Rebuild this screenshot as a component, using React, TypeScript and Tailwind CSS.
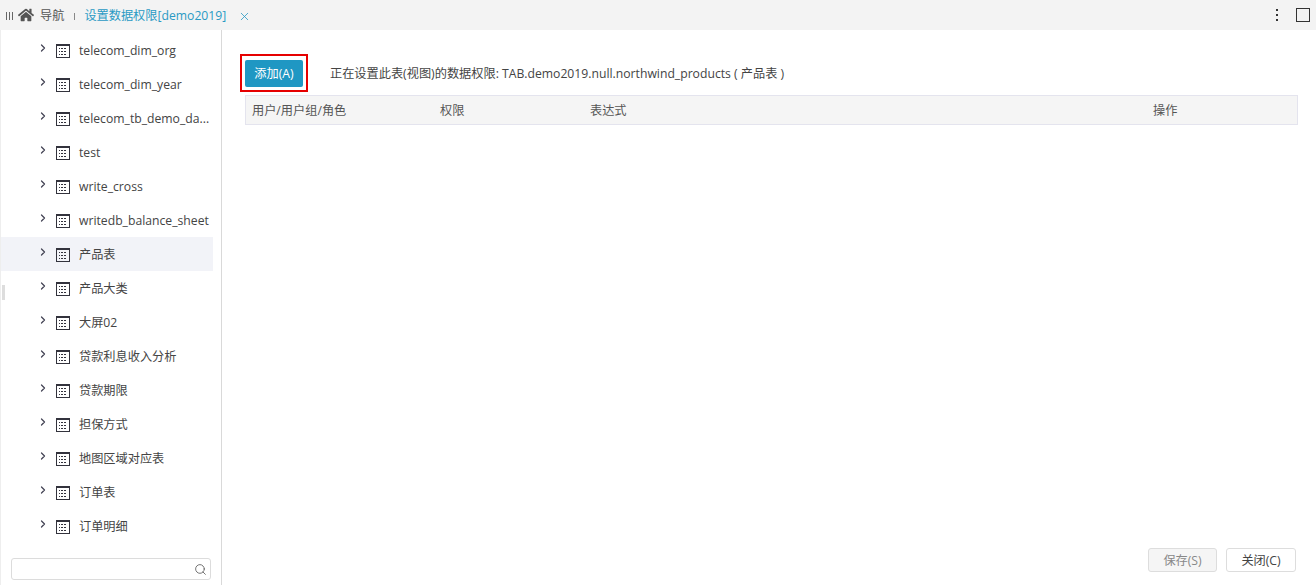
import { ChevronRight, Search, X } from 'lucide-react';
import { FaHome } from 'react-icons/fa';

const tables = [
  'telecom_dim_org',
  'telecom_dim_year',
  'telecom_tb_demo_da...',
  'test',
  'write_cross',
  'writedb_balance_sheet',
  '产品表',
  '产品大类',
  '大屏02',
  '贷款利息收入分析',
  '贷款期限',
  '担保方式',
  '地图区域对应表',
  '订单表',
  '订单明细',
];

function TableIcon() {
  return (
    <svg width="14" height="14" viewBox="0 0 14 14" className="shrink-0 text-[#33333d]">
      <rect x="0.5" y="0.5" width="13" height="13" fill="none" stroke="currentColor" />
      <rect x="0" y="0" width="14" height="2" fill="currentColor" />
      <path d="M3 4.5h1M3 7.5h1M3 10.5h1M5 4.5h6M5 7.5h6M5 10.5h6" stroke="currentColor" strokeDasharray="2 1" />
    </svg>
  );
}

export default function App() {
  return (
    <div className="flex h-[585px] w-[1316px] flex-col overflow-hidden bg-white font-['Open_Sans','Noto_Sans_CJK_SC',sans-serif] text-[12.2px] text-[#555555]">
      <div className="flex h-[30px] shrink-0 items-center bg-[#f3f3f3] pt-[2px]">
        <div className="ml-[6px] flex h-2 w-[7px] justify-between">
          <span className="w-px bg-[#666666]" />
          <span className="w-px bg-[#666666]" />
          <span className="w-px bg-[#666666]" />
        </div>
        <div className="mb-[3px] ml-[5px]">
          <FaHome size={16} className="text-[#555555]" />
        </div>
        <span className="ml-[6px]">导航</span>
        <span className="ml-[10px] h-[7px] w-px bg-[#888888]" />
        <span className="ml-[9px] text-[#2a9ac4]">设置数据权限[demo2019]</span>
        <X size={13} strokeWidth={1.5} className="ml-[12px] text-[#2a9ac4]" />
        <div className="mr-[38px] mb-[2px] ml-auto flex flex-col gap-[3px]">
          <span className="h-[2px] w-[2px] bg-[#333333]" />
          <span className="h-[2px] w-[2px] bg-[#333333]" />
          <span className="h-[2px] w-[2px] bg-[#333333]" />
        </div>
      </div>
      <div className="flex min-h-0 flex-1">
        <aside className="relative flex w-[222px] shrink-0 flex-col border-r border-l border-r-[#d9d9d9] border-l-[#eeeeee] pt-[3px]">
          <span className="absolute top-[255px] left-px h-[15px] w-[3px] bg-[#dddddd]" />
          <ul className="w-[212px]">
            {tables.map((name) => (
              <li
                key={name}
                className={`flex h-[34px] items-center pt-[2px] text-[#444444] ${name === '产品表' ? 'bg-[#f2f3f8]' : ''}`}
              >
                <ChevronRight size={12} strokeWidth={2.5} className="mb-[6px] ml-[36px] shrink-0 text-[#444455]" />
                <span className="ml-[7px] flex">
                  <TableIcon />
                </span>
                <span className="ml-[9px] whitespace-nowrap">{name}</span>
              </li>
            ))}
          </ul>
          <div className="relative mt-[15px] ml-[10px] h-[22px] w-[200px] rounded-[3px] border border-[#dcdcdc]">
            <Search size={13} strokeWidth={1.5} className="absolute top-[4px] right-[3px] text-[#555555]" />
          </div>
        </aside>
        <main className="flex min-w-0 flex-1 flex-col pt-[24px] pr-[18px] pb-[13px] pl-[18px]">
          <div className="flex h-[41px] items-start">
            <div className="h-[38px] w-[68px] border-2 border-[#e60000] pt-[4px] pl-[3px]">
              <button className="flex h-[27px] w-[58px] items-center justify-center rounded-[2px] bg-[#1f97c3] pt-px text-white">
                添加(A)
              </button>
            </div>
            <span className="mt-[11px] ml-[22px] text-[#444444]">
              正在设置此表(视图)的数据权限: TAB.demo2019.null.northwind_products ( 产品表 )
            </span>
          </div>
          <div className="ml-[5px] flex h-[30px] items-center border border-[#e4e4ee] bg-[#f5f5f5] pt-[2px] pl-[6px]">
            <span className="w-[188px]">用户/用户组/角色</span>
            <span className="w-[150px]">权限</span>
            <span className="w-[563px]">表达式</span>
            <span>操作</span>
          </div>
          <div className="mt-auto flex justify-end gap-[9px] pr-[2px]">
            <button className="h-6 w-[69px] rounded-[3px] border border-[#dddddd] bg-[#f5f5f5] pt-[2px] text-[#888888]">
              保存(S)
            </button>
            <button className="h-6 w-[70px] rounded-[3px] border border-[#dddddd] bg-white pt-[2px] text-[#444444]">
              关闭(C)
            </button>
          </div>
        </main>
      </div>
      <div className="absolute top-[8px] left-[1296px] h-[14px] w-[14px] border border-[#333333]" />
    </div>
  );
}
